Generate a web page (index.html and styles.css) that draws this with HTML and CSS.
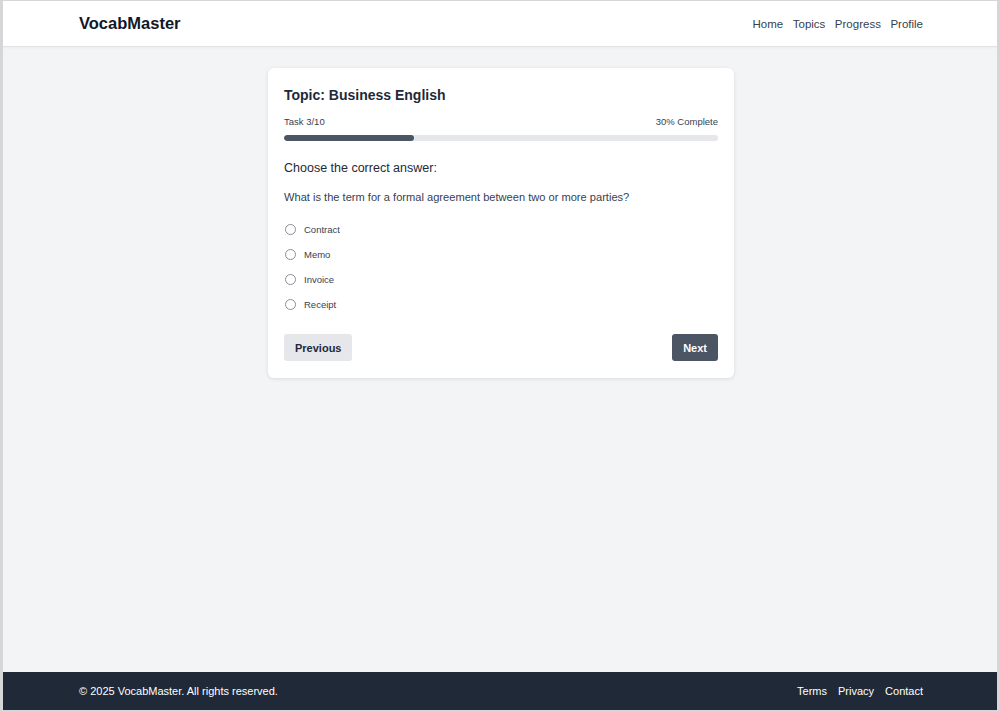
FILE: index.html
```html
<!DOCTYPE html>
<html lang="en">
<head>
    <meta charset="UTF-8">
    <meta name="viewport" content="width=device-width, initial-scale=1.0">
    <title>VocabMaster - Business English</title>
    <link rel="stylesheet" href="styles.css">
</head>
<body>
    <header class="site-header">
        <div class="wrap header-inner">
            <a class="logo" href="#">VocabMaster</a>
            <nav class="main-nav">
                <a href="#">Home</a>
                <a href="#">Topics</a>
                <a href="#">Progress</a>
                <a href="#">Profile</a>
            </nav>
        </div>
    </header>

    <main class="content">
        <div class="quiz-card">
            <h2 class="topic-title">Topic: Business English</h2>
            <div class="progress-info">
                <span>Task 3/10</span>
                <span>30% Complete</span>
            </div>
            <div class="progress-track">
                <div class="progress-fill" style="width: 30%"></div>
            </div>

            <h3 class="prompt">Choose the correct answer:</h3>
            <p class="question">What is the term for a formal agreement between two or more parties?</p>

            <form class="options">
                <label class="option"><input type="radio" name="answer"> <span>Contract</span></label>
                <label class="option"><input type="radio" name="answer"> <span>Memo</span></label>
                <label class="option"><input type="radio" name="answer"> <span>Invoice</span></label>
                <label class="option"><input type="radio" name="answer"> <span>Receipt</span></label>
            </form>

            <div class="quiz-actions">
                <button class="btn btn-secondary">Previous</button>
                <button class="btn btn-primary">Next</button>
            </div>
        </div>
    </main>

    <footer class="main-footer">
        <div class="wrap footer-inner">
            <p>&copy; 2025 VocabMaster. All rights reserved.</p>
            <nav class="footer-nav">
                <a href="#">Terms</a>
                <a href="#">Privacy</a>
                <a href="#">Contact</a>
            </nav>
        </div>
    </footer>
</body>
</html>
```

FILE: styles.css
```css
* {
    box-sizing: border-box;
}

html {
    height: 100%;
}

body {
    height: 100%;
    margin: 0;
    display: flex;
    flex-direction: column;
    font-family: "Liberation Sans", Arial, sans-serif;
    background-color: #f3f4f6;
    color: #1f2937;
    border-style: solid;
    border-color: #d6d6d8;
    border-width: 1px 3px 2px 3px;
}

a {
    text-decoration: none;
    color: inherit;
}

.wrap {
    width: 844px;
    margin: 0 74px 0 76px;
}

/* header */
.site-header {
    background: #ffffff;
    border-bottom: 1px solid #e2e3e6;
    box-shadow: 0 1px 2px rgba(0, 0, 0, 0.04);
}

.header-inner {
    height: 45px;
    display: flex;
    align-items: center;
    justify-content: space-between;
}

.logo {
    font-size: 16.5px;
    font-weight: bold;
    color: #111827;
}

.main-nav {
    display: flex;
    gap: 9.5px;
    font-size: 11.5px;
    color: #374151;
}

/* quiz card */
.content {
    flex: 1;
    padding: 21px 0 0 2px;
}

.quiz-card {
    width: 466px;
    margin: 0 auto;
    background: #ffffff;
    border-radius: 6px;
    box-shadow: 0 1px 4px rgba(0, 0, 0, 0.1);
    padding: 19px 16px 17px;
}

.topic-title {
    margin: 0 0 13px;
    font-size: 14px;
    font-weight: bold;
    color: #1f2937;
}

.progress-info {
    display: flex;
    justify-content: space-between;
    font-size: 9.5px;
    color: #374151;
    margin-bottom: 8px;
}

.progress-track {
    height: 6px;
    border-radius: 3px;
    background: #e5e7eb;
    overflow: hidden;
}

.progress-fill {
    height: 100%;
    background: #4b5563;
    border-radius: 3px;
}

.prompt {
    margin: 20px 0 0;
    font-size: 12.5px;
    font-weight: normal;
    color: #1f2937;
}

.question {
    margin: 16px 0 19px;
    font-size: 11.1px;
    color: #374151;
}

.options {
    display: flex;
    flex-direction: column;
    gap: 10px;
}

.option {
    display: flex;
    align-items: center;
    gap: 8px;
    font-size: 9.5px;
    color: #374151;
    height: 15px;
}

.option input {
    margin: 0 0 0 1px;
    width: 11px;
    height: 11px;
    appearance: none;
    border: 1px solid #8a8f98;
    border-radius: 50%;
    background: #ffffff;
}

.quiz-actions {
    display: flex;
    justify-content: space-between;
    margin-top: 22px;
}

.btn {
    font-family: inherit;
    font-size: 11px;
    font-weight: bold;
    border: none;
    border-radius: 3px;
    height: 27px;
    padding: 0 11px;
    cursor: pointer;
}

.btn-secondary {
    background: #e5e7eb;
    color: #1f2937;
}

.btn-primary {
    background: #4b5563;
    color: #ffffff;
}

/* footer */
.main-footer {
    background-color: #1f2937;
    color: #ffffff;
}

.footer-inner {
    height: 38px;
    display: flex;
    align-items: center;
    justify-content: space-between;
    font-size: 11px;
}

.footer-inner p {
    margin: 0;
}

.footer-nav {
    display: flex;
    gap: 11px;
}
```
